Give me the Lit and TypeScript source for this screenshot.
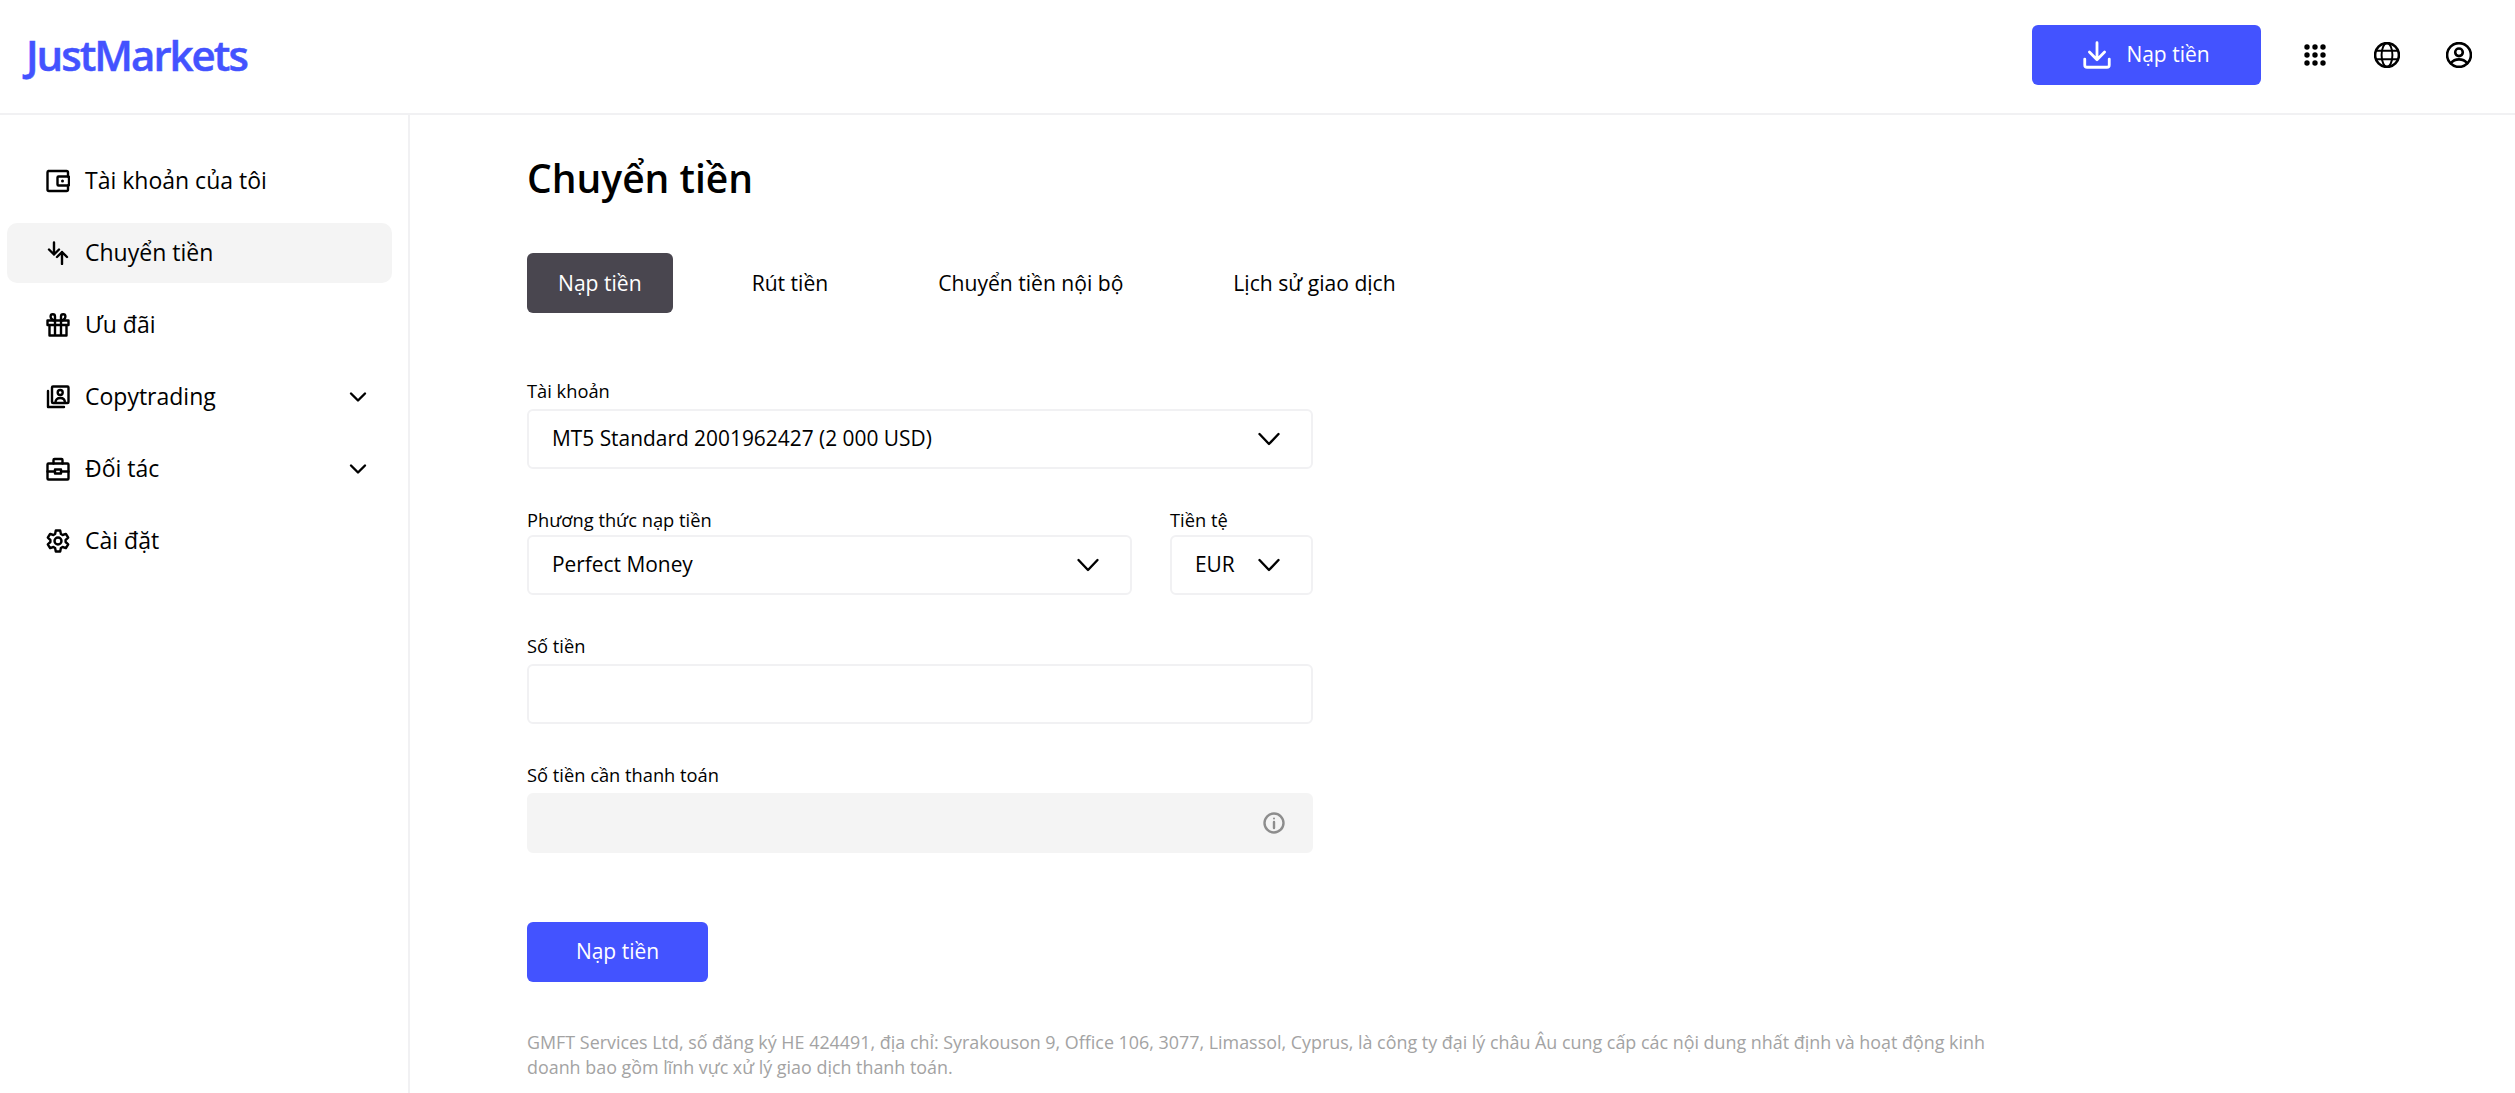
import { LitElement, html, css, svg } from "lit";
import { customElement } from "lit/decorators.js";

const icon = (body: unknown, size = 24) => html`<svg class="ic" width=${size} height=${size} viewBox="0 0 24 24" fill="none" stroke="currentColor" stroke-width="2.400" stroke-linecap="round" stroke-linejoin="round">${body}</svg>`;

const chevron = svg`<path d="M5 8.500l7 7 7-7"/>`;
const bigChevron = svg`<path d="M2.500 7L12 17l9.500-10"/>`;
const icons = {
  wallet: svg`<path d="M22 7.500V3.500a1.500 1.500 0 0 0-1.500-1.500H2.500A1.500 1.500 0 0 0 1.500 3.500v17a1.500 1.500 0 0 0 1.500 1.500h17.500a1.500 1.500 0 0 0 1.500-1.500v-4"/><rect x="11.500" y="7.500" width="11.500" height="9" rx="1"/><circle cx="16.500" cy="12" r="1.500" fill="currentColor" stroke="none"/>`,
  transfer: svg`<path d="M8 1.500v12M3 8.500l5 5 5-5"/><path d="M16 23V11M11 16l5-5 5 5"/>`,
  gift: svg`<path d="M1.500 7.500h21v4.500h-21zM3.500 12v10.500h17V12zM9 7.500v15M15 7.500v15"/><path d="M9 7.500V3.500a2.200 2.200 0 0 0-4.400 0c0 2 2 4 4.400 4zM15 7.500V3.500a2.200 2.200 0 0 1 4.400 0c0 2-2 4-4.400 4z"/>`,
  copy: svg`<rect x="6" y="1.500" width="16.500" height="16.500" rx="1"/><path d="M2 6v16h16"/><circle cx="14.200" cy="7.500" r="2.500"/><path d="M9.500 17.500c0-3 2-4.500 4.700-4.500s4.700 1.500 4.700 4.500"/>`,
  case: svg`<rect x="1.500" y="6.500" width="21" height="16" rx="1"/><path d="M7.500 6.500V3a1 1 0 0 1 1-1h7a1 1 0 0 1 1 1v3.500M1.500 14.500h7M15.500 14.500h7"/><rect x="9" y="12.500" width="6" height="4"/>`,
  gear: svg`<circle cx="12" cy="12" r="3.500"/><path d="M9.800 1.500h4.400l.7 3.500 1.700 1 3.300-1.100 2.300 3.800-2.600 2.300v2l2.600 2.300-2.300 3.800-3.300-1.100-1.700 1-.7 3.500H9.800l-.7-3.500-1.700-1-3.300 1.100-2.300-3.800 2.600-2.300v-2L1.800 8.700l2.300-3.800 3.300 1.100 1.700-1z"/>`,
  download: svg`<path d="M12 1.500v14M5.500 9.500l6.500 6.500 6.500-6.500"/><path d="M1.500 15.500v5a2 2 0 0 0 2 2h17a2 2 0 0 0 2-2v-5"/>`,
  globe: svg`<circle cx="12" cy="12" r="11"/><ellipse cx="12" cy="12" rx="5" ry="11" stroke-width="1.800"/><path d="M2 8h20M2 16h20" stroke-width="1.800"/>`,
  user: svg`<circle cx="12" cy="12" r="11"/><circle cx="12" cy="9.500" r="3.500"/><path d="M4.500 19.500c2-2.500 4.500-3.500 7.500-3.500s5.500 1 7.500 3.500"/>`,
};
const dots = html`<svg class="ic" width="24" height="24" viewBox="0 0 24 24" fill="currentColor">${[4, 12, 20].flatMap((y) => [4, 12, 20].map((x) => svg`<circle cx=${x} cy=${y} r="2.700"/>`))}</svg>`;

const nav = [
  { label: "Tài khoản của tôi", icon: icons.wallet },
  { label: "Chuyển tiền", icon: icons.transfer, active: true },
  { label: "Ưu đãi", icon: icons.gift },
  { label: "Copytrading", icon: icons.copy, more: true },
  { label: "Đối tác", icon: icons.case, more: true },
  { label: "Cài đặt", icon: icons.gear },
];
const tabs = ["Nạp tiền", "Rút tiền", "Chuyển tiền nội bộ", "Lịch sử giao dịch"];

@customElement("app-root")
export class AppRoot extends LitElement {
  static styles = css`
    :host { display: block; height: 1093px; overflow: hidden; background: #fff; color: #000; font-family: "Open Sans", "Noto Sans", sans-serif; }
    * { box-sizing: border-box; }
    .ic { display: block; flex: none; }
    header { height: 115px; border-bottom: 2px solid #f1f1f3; display: flex; align-items: center; padding: 0 43px 4px 26px; }
    .logo { font-size: 42px; font-weight: 600; letter-spacing: -2px; color: #4353ff; line-height: 1; -webkit-text-stroke: 0.5px #4353ff; }
    .spacer { flex: 1; }
    .btn { display: flex; align-items: center; justify-content: center; border-radius: 6px; background: #4353ff; color: #fff; height: 60px; font-size: 21px; padding-bottom: 2px; }
    .top-btn { width: 229px; gap: 15px; margin-right: 42px; }
    .top-btn .ic { margin-top: 2px; }
    .top-icons { display: flex; align-items: center; gap: 47px; }
    .top-icons .ic + .ic + .ic { margin-left: -1px; }
    .body { display: flex; height: 978px; }
    aside { width: 410px; flex: none; border-right: 2px solid #f1f1f3; padding: 36px 16px 0 7px; display: flex; flex-direction: column; gap: 12px; }
    .item { height: 60px; border-radius: 10px; display: flex; align-items: center; gap: 15px; padding: 0 22px 0 39px; font-size: 23px; }
    .item.active { background: #f4f4f4; }
    .item span { flex: 1; padding-bottom: 2px; }
    main { padding: 38px 0 0 117px; flex: 1; }
    h1 { margin: 0; font-size: 39px; font-weight: 600; line-height: 50px; }
    .tabs { display: flex; gap: 48px; margin-top: 50px; margin-bottom: 67px; }
    .tab { height: 60px; padding: 0 31px 2px; display: flex; align-items: center; border-radius: 6px; font-size: 21.100px; font-weight: 500; }
    .tab.active { background: #49464f; color: #fff; }
    form { width: 786px; display: flex; flex-direction: column; gap: 40px; }
    .row { display: flex; gap: 38px; }
    .field { flex: 1; min-width: 0; }
    .field.small { flex: none; width: 143px; }
    label { display: block; font-size: 18.300px; line-height: 22px; height: 29px; }
    .row label { height: 26px; }
    .box { height: 60px; border: 2px solid #f1f1f3; border-radius: 6px; display: flex; align-items: center; justify-content: space-between; padding: 0 30px 0 23px; font-size: 20.900px; }
    .box span { padding-bottom: 2px; }
    .box.ro { background: #f4f4f4; border-color: #f4f4f4; color: #8d8d8d; padding-right: 25px; }
    .submit { width: 181px; margin-top: 69px; font-weight: 500; }
    .legal { margin: 48px 0 0; width: 1480px; font-size: 17.900px; line-height: 25px; color: #a3a3a3; }
  `;

  render() {
    return html`
      <header>
        <div class="logo">JustMarkets</div>
        <div class="spacer"></div>
        <div class="btn top-btn">${icon(icons.download, 28)}<span>Nạp tiền</span></div>
        <div class="top-icons">${dots}${icon(icons.globe, 26)}${icon(icons.user, 26)}</div>
      </header>
      <div class="body">
        <aside>
          ${nav.map((n) => html`<div class="item ${n.active ? "active" : ""}">${icon(n.icon)}<span>${n.label}</span>${n.more ? icon(chevron) : ""}</div>`)}
        </aside>
        <main>
          <h1>Chuyển tiền</h1>
          <div class="tabs">${tabs.map((t, i) => html`<div class="tab ${i === 0 ? "active" : ""}">${t}</div>`)}</div>
          <form>
            <div class="field"><label>Tài khoản</label><div class="box"><span>MT5 Standard 2001962427 (2 000 USD)</span>${icon(bigChevron)}</div></div>
            <div class="row">
              <div class="field"><label>Phương thức nạp tiền</label><div class="box"><span>Perfect Money</span>${icon(bigChevron)}</div></div>
              <div class="field small"><label>Tiền tệ</label><div class="box"><span>EUR</span>${icon(bigChevron)}</div></div>
            </div>
            <div class="field"><label>Số tiền</label><div class="box"></div></div>
            <div class="field"><label>Số tiền cần thanh toán</label><div class="box ro"><span></span>${icon(svg`<circle cx="12" cy="12" r="9.500"/><path d="M12 11v6"/><circle cx="12" cy="7.500" r="1" fill="currentColor" stroke="none"/>`)}</div></div>
          </form>
          <div class="btn submit">Nạp tiền</div>
          <p class="legal">GMFT Services Ltd, số đăng ký HE 424491, địa chỉ: Syrakouson 9, Office 106, 3077, Limassol, Cyprus, là công ty đại lý châu Âu cung cấp các nội dung nhất định và hoạt động kinh doanh bao gồm lĩnh vực xử lý giao dịch thanh toán.</p>
        </main>
      </div>
    `;
  }
}
